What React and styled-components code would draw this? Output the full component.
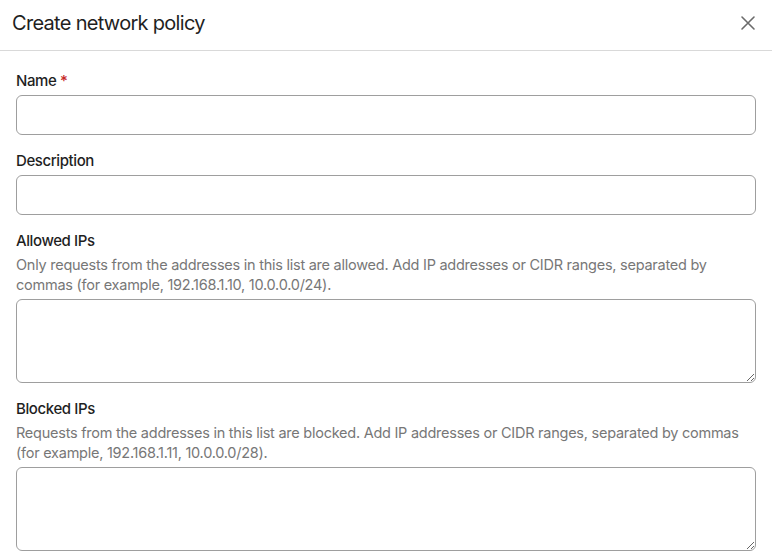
import styled, { createGlobalStyle } from 'styled-components';

const GlobalStyle = createGlobalStyle`
  html, body {
    margin: 0;
    padding: 0;
    background: #ffffff;
  }
  body {
    font-family: Inter, "Noto Sans", sans-serif;
    color: #1f1f1f;
    overflow: hidden;
  }
  * {
    box-sizing: border-box;
  }
`;

const CloseIcon = () => (
  <svg width="16" height="16" viewBox="0 0 16 16" fill="none">
    <path d="M2 2L14 14M14 2L2 14" stroke="#6b6b6b" strokeWidth="1.6" strokeLinecap="round" />
  </svg>
);

const App = () => {
  return (
    <>
      <GlobalStyle />
      <Dialog>
        <Header>
          <Title>Create network policy</Title>
          <CloseButton aria-label="Close">
            <CloseIcon />
          </CloseButton>
        </Header>
        <Body>
          <Field>
            <Label>
              Name <Required>*</Required>
            </Label>
            <Input type="text" />
          </Field>
          <Field>
            <Label>Description</Label>
            <Input type="text" />
          </Field>
          <Field>
            <Label>Allowed IPs</Label>
            <Help>
              Only requests from the addresses in this list are allowed. Add IP addresses or CIDR ranges, separated by
              commas (for example, 192.168.1.10, 10.0.0.0/24).
            </Help>
            <TextArea />
          </Field>
          <Field>
            <Label>Blocked IPs</Label>
            <Help>
              Requests from the addresses in this list are blocked. Add IP addresses or CIDR ranges, separated by commas
              (for example, 192.168.1.11, 10.0.0.0/28).
            </Help>
            <TextArea />
          </Field>
        </Body>
      </Dialog>
    </>
  );
};

export default App;

const Dialog = styled.div`
  width: 772px;
  height: 558px;
  background: #ffffff;
  display: flex;
  flex-direction: column;
`;

const Header = styled.div`
  height: 51px;
  flex-shrink: 0;
  display: flex;
  align-items: center;
  justify-content: space-between;
  padding: 0 14px 5px 12px;
  border-bottom: 1px solid #d9d9d9;
`;

const Title = styled.h2`
  margin: 0;
  font-size: 20px;
  font-weight: 400;
  color: #1f1f1f;
  letter-spacing: -0.7px;
`;

const CloseButton = styled.button`
  border: none;
  background: none;
  padding: 0;
  width: 20px;
  height: 20px;
  display: flex;
  align-items: center;
  justify-content: center;
  cursor: pointer;
`;

const Body = styled.div`
  padding: 20px 16px 0 16px;
  display: flex;
  flex-direction: column;
  gap: 16px;
`;

const Field = styled.div`
  display: flex;
  flex-direction: column;
`;

const Label = styled.label`
  font-size: 15px;
  font-weight: 500;
  line-height: 20px;
  letter-spacing: -0.4px;
  color: #1f1f1f;
  margin-bottom: 4px;
`;

const Required = styled.span`
  color: #c62828;
`;

const Help = styled.div`
  font-size: 14.5px;
  line-height: 20px;
  letter-spacing: -0.25px;
  color: #777777;
  margin-bottom: 4px;
`;

const Input = styled.input`
  width: 100%;
  height: 40px;
  border: 1px solid #9e9e9e;
  border-radius: 6px;
  padding: 0 12px;
  font-family: inherit;
  font-size: 15px;
  outline: none;
`;

const TextArea = styled.textarea`
  width: 100%;
  height: 84px;
  border: 1px solid #9e9e9e;
  border-radius: 6px;
  padding: 8px 12px;
  font-family: inherit;
  font-size: 15px;
  outline: none;
  resize: vertical;
  display: block;
`;
